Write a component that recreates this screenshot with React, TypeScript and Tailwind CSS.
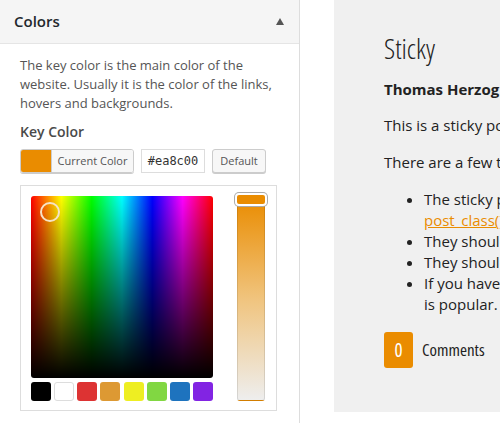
export default function App() {
  const swatches = [
    "bg-[#000000]",
    "bg-[#ffffff] border border-[#dddddd]",
    "bg-[#dd3333]",
    "bg-[#dd9933]",
    "bg-[#eeee22]",
    "bg-[#81d742]",
    "bg-[#1e73be]",
    "bg-[#8224e3]",
  ];
  return (
    <div className="flex w-[500px] h-[423px] overflow-hidden bg-white font-['Open_Sans',sans-serif]">
      {/* Left customizer panel */}
      <div className="w-[300px] shrink-0 h-full border-r border-[#dddddd]">
        <div className="h-[44px] bg-[#f5f5f5] border-b border-[#e5e5e5] flex items-center justify-between pl-[14px] pr-[15px]">
          <span className="text-[15px] font-semibold text-[#23282d]">Colors</span>
          <svg width="8" height="7" viewBox="0 0 8 7" className="mb-[1px]">
            <polygon points="4,0 8,7 0,7" fill="#555555" />
          </svg>
        </div>
        <div className="pl-[20px] pt-[12px]">
          <p className="text-[13px] leading-[19px] text-[#555555]">
            The key color is the main color of the
            <br />
            website. Usually it is the color of the links,
            <br />
            hovers and backgrounds.
          </p>
          <div className="mt-[9px] text-[14px] leading-[20px] font-semibold text-[#4a4a4a]">Key Color</div>
          <div className="mt-[7px] flex items-center h-[24px]">
            <div className="flex h-[24px] w-[114px] rounded-[3px] border border-[#cccccc] overflow-hidden shadow-[0_1px_0_#cccccc]">
              <div className="w-[30px] h-full bg-[#ea8c00]" />
              <div className="flex-1 bg-[#f7f7f7] border-l border-[#cccccc] flex items-center justify-center text-[11px] text-[#555555]">
                Current Color
              </div>
            </div>
            <div className="ml-[7px] w-[64px] h-[24px] border border-[#dddddd] bg-white flex items-center justify-center font-['DejaVu_Sans_Mono',monospace] text-[12px] text-[#333333]">
              #ea8c00
            </div>
            <div className="ml-[7px] w-[54px] h-[24px] rounded-[3px] border border-[#cccccc] bg-[#f7f7f7] shadow-[0_1px_0_#cccccc] flex items-center justify-center text-[11px] text-[#555555]">
              Default
            </div>
          </div>
          <div className="mt-[12px] w-[257px] h-[226px] border border-[#dddddd] flex pl-[10px] pt-[10px]">
            <div className="w-[182px]">
              <div className="relative w-[182px] h-[182px] rounded-[3px] bg-[linear-gradient(to_bottom,rgba(0,0,0,0)_0%,#000000_100%),linear-gradient(to_right,#ff0000,#ffff00,#00ff00,#00ffff,#0000ff,#ff00ff,#ff0000)]">
                <div className="absolute left-[9px] top-[6px] w-[20px] h-[20px] rounded-full border-2 border-[#f6e3c6]" />
              </div>
              <div className="mt-[4px] flex justify-between">
                {swatches.map((s, i) => (
                  <div key={i} className={`w-[20px] h-[19px] rounded-[3px] ${s}`} />
                ))}
              </div>
            </div>
            <div className="ml-[24px] mt-[1px] relative w-[28px] h-[204px]">
              <div className="w-full h-full rounded-[3px] border border-black/10 bg-[linear-gradient(to_bottom,#ea8c00_0%,#f0c47e_50%,#eeeeee_100%)]" />
              <div className="absolute left-[-2px] top-[-4px] w-[32px] h-[13px] rounded-[4px] border-2 border-white bg-[#ea8c00] ring-1 ring-[#aaaaaa]" />
            </div>
          </div>
        </div>
      </div>

      {/* Preview */}
      <div className="ml-[34px] flex-1 h-[412px] bg-[#f0f0f0] pl-[50px] pt-[31px] overflow-hidden text-[#222222]">
        <h1 className="text-[28px] leading-[34px] font-light font-stretch-condensed whitespace-nowrap">Sticky</h1>
        <div className="mt-[14px] text-[15px] leading-[21px] font-bold whitespace-nowrap">Thomas Herzog</div>
        <p className="mt-[15px] text-[15px] leading-[21px] whitespace-nowrap">This is a sticky post.</p>
        <p className="mt-[16px] text-[15px] leading-[21px] whitespace-nowrap">There are a few things to verify:</p>
        <ul className="mt-[16px] list-disc pl-[40px] text-[15px] leading-[21px] whitespace-nowrap">
          <li>
            The sticky post should be distinctly recognizable
            <br />
            <span className="text-[#ea8c00] underline">post_class()</span> function to generate your post classes.
          </li>
          <li>They should show at the very top of the blog index page.</li>
          <li>They shouldn't show at the very top of any other archive page.</li>
          <li>
            If you have a plugin or widget that lists popular posts, make sure
            <br />
            is popular.
          </li>
        </ul>
        <div className="mt-[17px] flex items-center">
          <div className="w-[29px] h-[36px] rounded-[3px] bg-[#ea8c00] text-white flex items-center justify-center text-[19px] font-stretch-condensed">
            0
          </div>
          <span className="ml-[9px] text-[17px] font-stretch-condensed">Comments</span>
        </div>
      </div>
    </div>
  );
}
